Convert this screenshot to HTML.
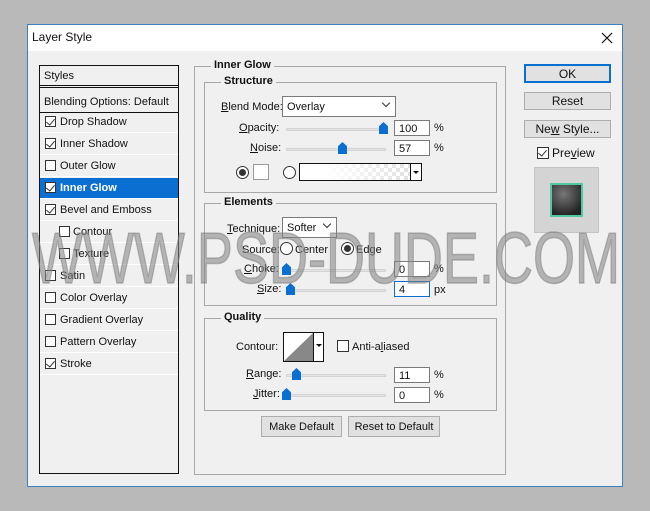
<!DOCTYPE html>
<html><head><meta charset="utf-8"><style>
*{box-sizing:border-box;margin:0;padding:0}
body{width:650px;height:511px;background:#b9b9b9;font-family:"Liberation Sans",sans-serif;font-size:11px;color:#111;position:relative;overflow:hidden}
.a{position:absolute}
#dlg{left:27px;top:24px;width:596px;height:463px;background:#f0f0f0;border:1px solid #3c7fc1}
#title{left:0;top:0;width:594px;height:26px;background:#fff}
.lbl{position:absolute;white-space:nowrap}
.grp{position:absolute;border:1px solid #a8a8a8}
.gt{position:absolute;top:-8px;left:8px;background:#f0f0f0;padding:0 3px;font-weight:bold;font-size:11px}
.cb{position:absolute;width:11px;height:11px;border:1px solid #333;background:#fff}
.cb.on::after{content:"";position:absolute;left:2px;top:0px;width:4px;height:7px;border:solid #333;border-width:0 1px 1px 0;transform:rotate(40deg)}
.row{position:absolute;left:1px;width:138px;height:21px;border-bottom:1px solid #fff}
.row span{position:absolute;top:4px}
.inp{position:absolute;width:36px;height:16px;background:#fff;border:1px solid #7a7a7a;padding:2px 0 0 4px}
.trk{position:absolute;height:3px;background:#e4e4e4;border:1px solid #d4d4d4;width:100px}
.th{position:absolute;width:9px;height:12px;background:#0a6fd0;clip-path:polygon(50% 0,100% 35%,100% 100%,0 100%,0 35%)}
.btn{position:absolute;background:#e1e1e1;border:1px solid #adadad;text-align:center;font-size:12px}
.rad{position:absolute;width:13px;height:13px;border:1px solid #333;border-radius:50%;background:#fff}
.rad.on::after{content:"";position:absolute;left:2px;top:2px;width:7px;height:7px;border-radius:50%;background:#333}
.sel{position:absolute;background:#fff;border:1px solid #7a7a7a;padding:4px 0 0 4px}
.sel i{position:absolute;right:6px;top:3px;width:6px;height:6px;border:solid #333;border-width:0 1px 1px 0;transform:rotate(45deg)}
u{text-decoration:underline}
</style></head><body>
<div id="dlg" class="a">
 <div id="title" class="a"><span class="lbl" style="left:4px;top:5px;font-size:12px">Layer Style</span>
 <svg class="a" style="left:573px;top:7px" width="12" height="12"><path d="M1 1L11 11M11 1L1 11" stroke="#111" stroke-width="1.2"/></svg></div>
 <div class="a" style="left:11px;top:40px;width:140px;height:409px;border:1px solid #111;background:#f0f0f0">
  <div class="row" style="top:0;height:22px;border-bottom:3px double #111;left:0;width:138px"><span style="left:4px">Styles</span></div>
  <div class="row" style="top:24px;height:23px;border-bottom:1px solid #111;left:0;width:138px"><span style="left:4px;top:6px">Blending Options: Default</span></div>
 </div>
</div>
<div class="a" style="left:39px;top:112px;width:138px;height:358px">
 <div class="row" style="top:0"><div class="cb on" style="left:5px;top:4px"></div><span style="left:20px">Drop Shadow</span></div>
 <div class="row" style="top:22px"><div class="cb on" style="left:5px;top:4px"></div><span style="left:20px">Inner Shadow</span></div>
 <div class="row" style="top:44px"><div class="cb" style="left:5px;top:4px"></div><span style="left:20px">Outer Glow</span></div>
 <div class="row" style="top:66px;background:#0a6fd0;color:#fff;font-weight:bold"><div class="cb on" style="left:5px;top:4px"></div><span style="left:20px">Inner Glow</span></div>
 <div class="row" style="top:88px"><div class="cb on" style="left:5px;top:4px"></div><span style="left:20px">Bevel and Emboss</span></div>
 <div class="row" style="top:110px"><div class="cb" style="left:19px;top:4px"></div><span style="left:33px">Contour</span></div>
 <div class="row" style="top:132px"><div class="cb" style="left:19px;top:4px"></div><span style="left:33px">Texture</span></div>
 <div class="row" style="top:154px"><div class="cb" style="left:5px;top:4px"></div><span style="left:20px">Satin</span></div>
 <div class="row" style="top:176px"><div class="cb" style="left:5px;top:4px"></div><span style="left:20px">Color Overlay</span></div>
 <div class="row" style="top:198px"><div class="cb" style="left:5px;top:4px"></div><span style="left:20px">Gradient Overlay</span></div>
 <div class="row" style="top:220px"><div class="cb" style="left:5px;top:4px"></div><span style="left:20px">Pattern Overlay</span></div>
 <div class="row" style="top:242px"><div class="cb on" style="left:5px;top:4px"></div><span style="left:20px">Stroke</span></div>
</div>
<div class="grp" style="left:194px;top:66px;width:312px;height:409px"><div class="gt" style="left:16px">Inner Glow</div></div>
<div class="grp" style="left:204px;top:82px;width:293px;height:111px"><div class="gt" style="left:16px">Structure</div></div>
<div class="grp" style="left:204px;top:203px;width:293px;height:103px"><div class="gt" style="left:16px">Elements</div></div>
<div class="grp" style="left:204px;top:318px;width:293px;height:93px"><div class="gt" style="left:16px">Quality</div></div>
<span class="lbl" style="left:221px;top:101px"><u>B</u>lend Mode:</span>
<div class="sel" style="left:282px;top:96px;width:114px;height:21px">Overlay<i></i></div>
<span class="lbl" style="left:239px;top:122px"><u>O</u>pacity:</span>
<div class="trk" style="left:286px;top:128px"></div><div class="th" style="left:379px;top:122px"></div>
<div class="inp" style="left:394px;top:120px">100</div><span class="lbl" style="left:434px;top:122px">%</span>
<span class="lbl" style="left:250px;top:142px"><u>N</u>oise:</span>
<div class="trk" style="left:286px;top:148px"></div><div class="th" style="left:338px;top:142px"></div>
<div class="inp" style="left:394px;top:140px">57</div><span class="lbl" style="left:434px;top:142px">%</span>
<div class="rad on" style="left:236px;top:166px"></div>
<div class="a" style="left:253px;top:164px;width:16px;height:16px;background:#fff;border:1px solid #999"></div>
<div class="rad" style="left:283px;top:166px"></div>
<div class="a" style="left:299px;top:163px;width:123px;height:18px;border:1px solid #111;background-color:#fff;background-image:linear-gradient(90deg,#fff 20%,rgba(255,255,255,0)),repeating-conic-gradient(#ddd 0 25%,#fff 0 50%);background-size:100% 100%,8px 8px"></div>
<div class="a" style="left:410px;top:163px;width:12px;height:18px;border:1px solid #111;background:#fff"><div class="a" style="left:2px;top:7px;border:3px solid transparent;border-top:3px solid #111"></div></div>
<span class="lbl" style="left:227px;top:223px"><u>T</u>echnique:</span>
<div class="sel" style="left:282px;top:217px;width:55px;height:21px">Softer<i></i></div>
<span class="lbl" style="left:242px;top:244px">Source:</span>
<div class="rad" style="left:280px;top:242px"></div><span class="lbl" style="left:295px;top:244px">Center</span>
<div class="rad on" style="left:341px;top:242px"></div><span class="lbl" style="left:356px;top:244px">Edge</span>
<span class="lbl" style="left:244px;top:263px"><u>C</u>hoke:</span>
<div class="trk" style="left:286px;top:269px"></div><div class="th" style="left:282px;top:263px"></div>
<div class="inp" style="left:394px;top:261px">0</div><span class="lbl" style="left:434px;top:263px">%</span>
<span class="lbl" style="left:257px;top:283px"><u>S</u>ize:</span>
<div class="trk" style="left:286px;top:289px"></div><div class="th" style="left:286px;top:283px"></div>
<div class="inp" style="left:394px;top:281px;border-color:#0a6fd0">4</div><span class="lbl" style="left:434px;top:284px">px</span>
<span class="lbl" style="left:236px;top:341px">Contour:</span>
<div class="a" style="left:283px;top:332px;width:41px;height:30px;border:1px solid #111;background:#fff">
 <svg class="a" style="left:0;top:0" width="29" height="28"><path d="M0 28L29 0L29 28Z" fill="#888"/></svg>
 <div class="a" style="left:29px;top:-1px;width:11px;height:30px;border-left:1px solid #111"><div class="a" style="left:2px;top:12px;border:3px solid transparent;border-top:3px solid #111"></div></div></div>
<div class="cb" style="left:337px;top:340px;width:12px;height:12px"></div><span class="lbl" style="left:352px;top:341px">Anti-a<u>l</u>iased</span>
<span class="lbl" style="left:246px;top:368px"><u>R</u>ange:</span>
<div class="trk" style="left:286px;top:374px"></div><div class="th" style="left:292px;top:368px"></div>
<div class="inp" style="left:394px;top:367px">11</div><span class="lbl" style="left:434px;top:369px">%</span>
<span class="lbl" style="left:253px;top:388px"><u>J</u>itter:</span>
<div class="trk" style="left:286px;top:394px"></div><div class="th" style="left:282px;top:388px"></div>
<div class="inp" style="left:394px;top:387px">0</div><span class="lbl" style="left:434px;top:389px">%</span>
<div class="btn" style="left:261px;top:416px;width:81px;height:21px;font-size:11px;padding-top:4px">Make Default</div>
<div class="btn" style="left:348px;top:416px;width:92px;height:21px;font-size:11px;padding-top:4px">Reset to Default</div>
<div class="btn" style="left:524px;top:64px;width:87px;height:19px;border:2px solid #0a6fd0;padding-top:1px">OK</div>
<div class="btn" style="left:524px;top:92px;width:87px;height:18px;padding-top:1px">Reset</div>
<div class="btn" style="left:524px;top:120px;width:87px;height:18px;padding-top:1px">Ne<u>w</u> Style...</div>
<div class="cb on" style="left:537px;top:147px;width:12px;height:12px"></div>
<span class="lbl" style="left:552px;top:146px;font-size:12px">Pre<u>v</u>iew</span>
<div class="a" style="left:534px;top:167px;width:65px;height:66px;background:#d4d4d4;border:1px solid #c4c4c4"></div>
<div class="a" style="left:550px;top:183px;width:33px;height:34px;background:radial-gradient(circle at 40% 30%,#777,#222 80%);border:2px solid #4fc9a5"></div>
<div class="a" style="left:32px;top:219px;font-size:72px;line-height:80px;color:rgba(130,130,130,0.55);white-space:nowrap;transform:scaleX(0.75);transform-origin:0 0;-webkit-text-stroke:1.5px rgba(130,130,130,0.55)">WWW.PSD-DUDE.COM</div>
</body></html>
